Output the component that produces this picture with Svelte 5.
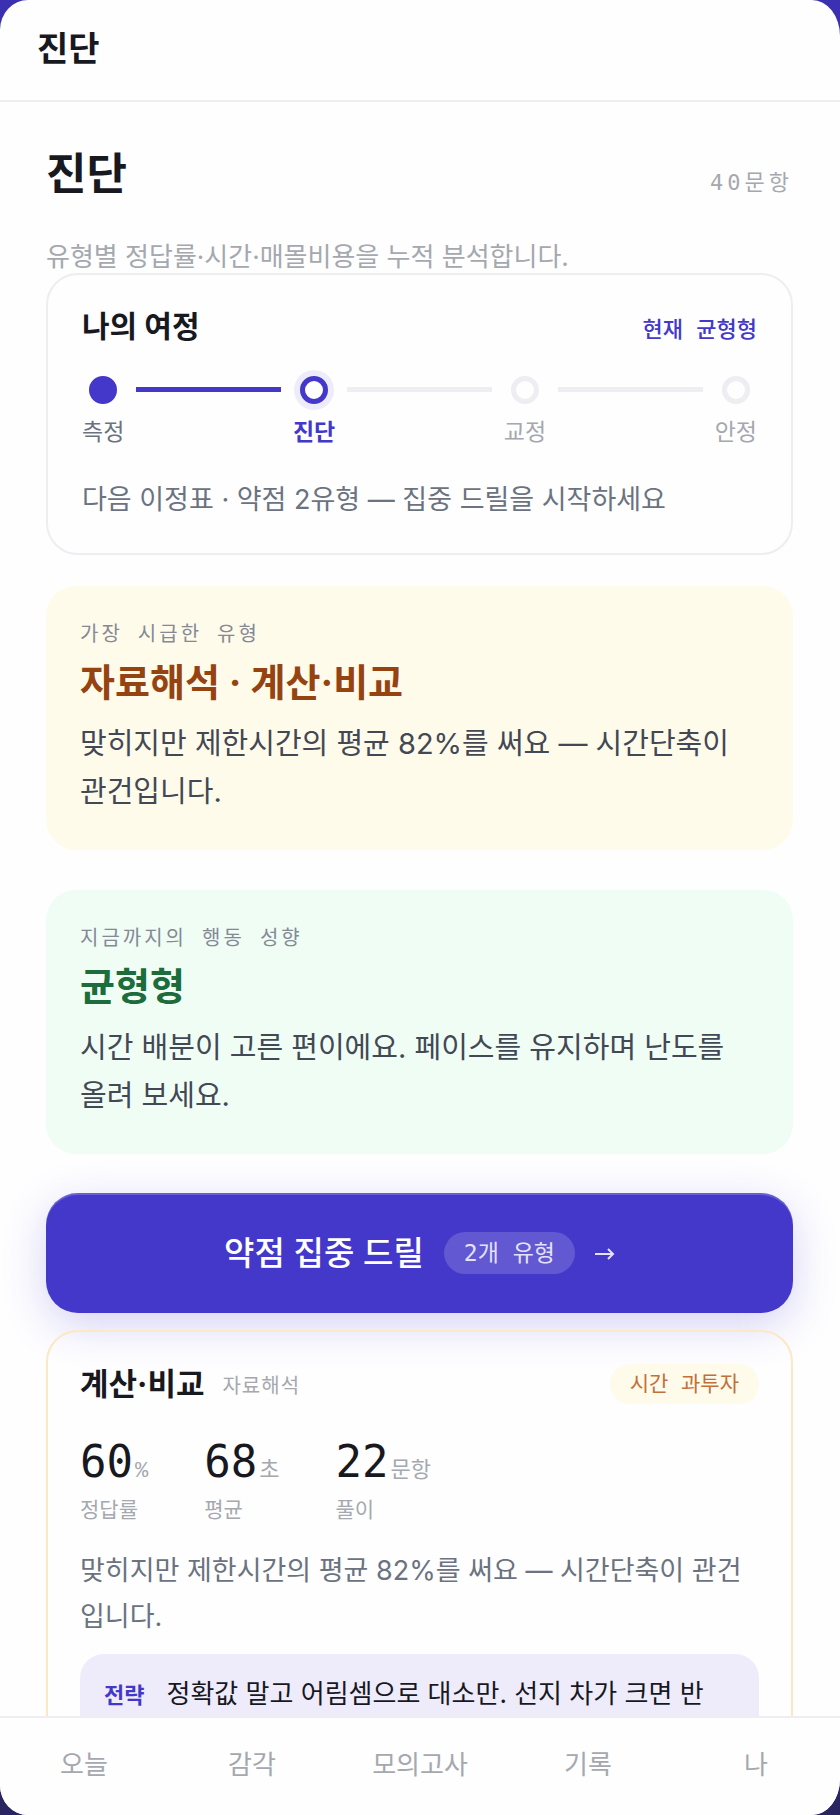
<script lang="ts">
  type StepState = 'done' | 'current' | 'upcoming';

  const steps: {label: string; state: StepState}[] = [
    {label: '측정', state: 'done'},
    {label: '진단', state: 'current'},
    {label: '교정', state: 'upcoming'},
    {label: '안정', state: 'upcoming'},
  ];

  const insights = [
    {
      tone: 'warn',
      label: '가장 시급한 유형',
      title: '자료해석 · 계산·비교',
      body: '맞히지만 제한시간의 평균 82%를 써요 — 시간단축이 관건입니다.',
    },
    {
      tone: 'good',
      label: '지금까지의 행동 성향',
      title: '균형형',
      body: '시간 배분이 고른 편이에요. 페이스를 유지하며 난도를 올려 보세요.',
    },
  ];

  const stats = [
    {value: 60, unit: '%', label: '정답률'},
    {value: 68, unit: '초', label: '평균'},
    {value: 22, unit: '문항', label: '풀이'},
  ];

  const tabs = ['오늘', '감각', '모의고사', '기록', '나'];
</script>

<div class="screen">
  <header class="topbar">진단</header>

  <main class="content">
    <div class="heading">
      <h1>진단</h1>
      <span class="count mono">40문항</span>
    </div>
    <p class="lead">유형별 정답률·시간·매몰비용을 누적 분석합니다.</p>

    <section class="journey">
      <div class="journey-head">
        <h2>나의 여정</h2>
        <span class="journey-type mono">현재 균형형</span>
      </div>
      <ol class="steps">
        {#each steps as step, index}
          {#if index > 0}
            <li class="line" class:filled={steps[index - 1].state === 'done'} aria-hidden="true"></li>
          {/if}
          <li class="step {step.state}" aria-current={step.state === 'current' ? 'step' : undefined}>
            <span class="dot"></span>
            <span>{step.label}</span>
          </li>
        {/each}
      </ol>
      <p class="next">다음 이정표 · 약점 2유형 — 집중 드릴을 시작하세요</p>
    </section>

    {#each insights as insight}
      <section class="insight {insight.tone}">
        <p class="insight-label mono">{insight.label}</p>
        <h2>{insight.title}</h2>
        <p class="insight-body">{insight.body}</p>
      </section>
    {/each}

    <button type="button" class="drill">
      <span>약점 집중 드릴</span>
      <span class="drill-count mono">2개 유형</span>
      <svg width="20" height="16" viewBox="0 0 20 16" aria-hidden="true">
        <path d="M0 9h18M13 4l5 5-5 5" />
      </svg>
    </button>

    <article class="type-card">
      <div class="type-head">
        <h3>계산·비교</h3>
        <span class="category mono">자료해석</span>
        <span class="badge mono">시간 과투자</span>
      </div>
      <dl class="stats">
        {#each stats as stat}
          <div class="stat">
            <dt>{stat.label}</dt>
            <dd class="mono">{stat.value}<small>{stat.unit}</small></dd>
          </div>
        {/each}
      </dl>
      <p class="type-body">맞히지만 제한시간의 평균 82%를 써요 — 시간단축이 관건입니다.</p>
      <div class="strategy">
        <strong class="mono">전략</strong>
        <p>정확값 말고 어림셈으로 대소만. 선지 차가 크면 반</p>
      </div>
    </article>
  </main>

  <nav class="tabs">
    {#each tabs as tab}
      <a href="#{tab}">{tab}</a>
    {/each}
  </nav>
</div>

<style>
  :global(body) {
    margin: 0;
    background: linear-gradient(#3c30b2, #282560);
  }

  .screen {
    --ink: #18181f;
    --muted: #6b7280;
    --faint: #a5a8ae;
    --line: #ededf2;
    --accent: #4338ca;
    --accent-soft: #eeecfb;
    display: flex;
    flex-direction: column;
    height: 100vh;
    overflow: hidden;
    border-radius: 28px / 30px 36px 36px 30px;
    background: #fefeff;
    color: var(--ink);
    font-family: Inter, "Noto Sans CJK KR", sans-serif;
  }

  h1,
  h2,
  h3,
  p,
  dl,
  dd,
  ol {
    margin: 0;
    padding: 0;
  }

  .mono {
    font-family: "DejaVu Sans Mono", "Noto Sans CJK KR", monospace;
  }

  .topbar {
    flex: none;
    padding: 25px 37px 27px;
    border-bottom: 2px solid var(--line);
    font-size: 34px;
    font-weight: 700;
    line-height: 48px;
  }

  .content {
    flex: 1;
    min-height: 0;
    padding: 40px 47px 40px 46px;
    overflow-y: auto;
    scrollbar-width: none;
  }

  .heading {
    display: flex;
    align-items: baseline;
    justify-content: space-between;
  }

  h1 {
    font-size: 44px;
    font-weight: 700;
    line-height: 64px;
  }

  .count {
    color: var(--faint);
    font-size: 22px;
    letter-spacing: 4px;
  }

  .lead {
    margin-top: 34px;
    color: var(--faint);
    font-size: 26px;
    line-height: 33px;
  }

  .journey {
    padding: 29px 34px 31px;
    border: 2px solid var(--line);
    border-radius: 32px;
  }

  .journey-head {
    display: flex;
    align-items: baseline;
    justify-content: space-between;
  }

  .journey-head h2 {
    font-size: 30px;
    font-weight: 700;
    line-height: 44px;
  }

  .journey-type {
    color: var(--accent);
    font-size: 22px;
    font-weight: 500;
  }

  .steps {
    display: flex;
    gap: 12px;
    margin-top: 28px;
    list-style: none;
  }

  .step {
    display: flex;
    flex-direction: column;
    align-items: center;
    gap: 12px;
    color: var(--faint);
    font-size: 23px;
    line-height: 32px;
  }

  .dot {
    box-sizing: border-box;
    width: 28px;
    height: 28px;
    border: 5px solid var(--line);
    border-radius: 50%;
  }

  .done {
    color: var(--muted);
  }

  .done .dot {
    border-color: var(--accent);
    background: var(--accent);
  }

  .current {
    color: var(--accent);
    font-weight: 700;
  }

  .current .dot {
    border-color: var(--accent);
    box-shadow: 0 0 0 6px var(--accent-soft);
  }

  .line {
    flex: 1;
    height: 5px;
    margin-top: 11px;
    background: var(--line);
  }

  .line.filled {
    background: var(--accent);
  }

  .next {
    margin-top: 30px;
    color: var(--muted);
    font-size: 27px;
    line-height: 44px;
  }

  .insight {
    margin-top: 40px;
    padding: 34px;
    border-radius: 30px;
  }

  .journey + .insight {
    margin-top: 31px;
  }

  .insight-label {
    color: #858994;
    font-size: 20px;
    line-height: 28px;
    letter-spacing: 3px;
  }

  .insight h2 {
    margin-top: 6px;
    font-size: 38px;
    font-weight: 700;
    line-height: 56px;
  }

  .insight-body {
    margin-top: 10px;
    color: #424854;
    font-size: 29px;
    line-height: 48px;
  }

  .warn {
    background: #fffbeb;
  }

  .warn h2 {
    color: #954311;
  }

  .good {
    background: #effdf4;
  }

  .good h2 {
    color: #1c6c3c;
  }

  .drill {
    display: flex;
    align-items: center;
    justify-content: center;
    gap: 20px;
    width: 100%;
    margin-top: 39px;
    padding: 36px;
    border: 0;
    border-radius: 32px;
    background: var(--accent);
    box-shadow: 0 12px 44px rgba(67, 56, 202, 0.22), inset 0 2px 0 rgba(255, 255, 255, 0.2);
    color: #fff;
    font-family: inherit;
    font-size: 33px;
    font-weight: 500;
    line-height: 48px;
    cursor: pointer;
  }

  .drill-count {
    padding: 5px 20px;
    border-radius: 24px;
    background: rgba(255, 255, 255, 0.16);
    color: #e4e2f8;
    font-size: 23px;
    font-weight: 400;
    line-height: 32px;
  }

  .drill svg {
    fill: none;
    stroke: #e4e2f8;
    stroke-width: 2;
  }

  .type-card {
    margin-top: 17px;
    padding: 30px 32px;
    border: 2px solid #fce8c5;
    border-radius: 32px;
  }

  .type-head {
    display: flex;
    align-items: center;
  }

  h3 {
    font-size: 31px;
    font-weight: 700;
    line-height: 44px;
  }

  .category {
    margin-left: 18px;
    color: var(--faint);
    font-size: 20px;
    letter-spacing: 1px;
  }

  .badge {
    margin-left: auto;
    padding: 5px 20px;
    border-radius: 22px;
    background: #fffbeb;
    color: #c2703a;
    font-size: 21px;
    line-height: 30px;
  }

  .stats {
    display: flex;
    gap: 56px;
    margin-top: 28px;
  }

  .stat {
    display: flex;
    flex-direction: column-reverse;
    gap: 6px;
  }

  .stat dt {
    color: var(--faint);
    font-size: 21px;
    line-height: 28px;
  }

  .stat dd {
    font-size: 44px;
    line-height: 56px;
  }

  .stat small {
    margin-left: 2px;
    color: var(--faint);
    font-family: "Liberation Mono", "Noto Sans CJK KR", monospace;
    font-size: 22px;
    line-height: 22px;
  }

  .type-body {
    margin-top: 24px;
    color: var(--muted);
    font-size: 27px;
    line-height: 46px;
  }

  .strategy {
    display: flex;
    align-items: baseline;
    gap: 22px;
    margin-top: 14px;
    padding: 18px 24px 32px;
    border-radius: 24px;
    background: var(--accent-soft);
    font-size: 26px;
    line-height: 44px;
  }

  .strategy strong {
    flex: none;
    color: var(--accent);
    font-size: 22px;
  }

  .tabs {
    display: flex;
    flex: none;
    padding: 22px 0 26px;
    border-top: 2px solid var(--line);
    background: #fefeff;
  }

  .tabs a {
    flex: 1;
    color: var(--faint);
    font-size: 26px;
    line-height: 49px;
    text-align: center;
    text-decoration: none;
  }
</style>
